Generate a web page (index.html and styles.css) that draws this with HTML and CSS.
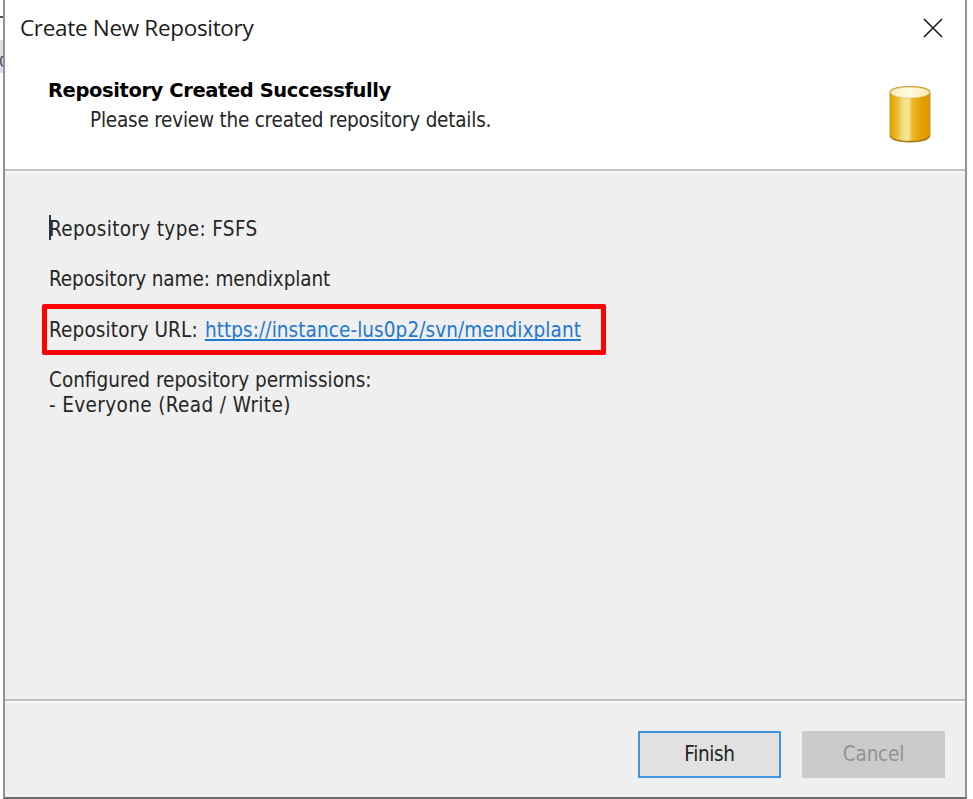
FILE: index.html
```
<!DOCTYPE html>
<html lang="en">
<head>
<meta charset="utf-8">
<title>Create New Repository</title>
<link rel="stylesheet" href="styles.css">
</head>
<body>
<div class="backdrop" aria-hidden="true">
  <span class="backdrop-mark"></span>
  <span class="backdrop-tab"><svg class="backdrop-glyph" viewBox="0 0 3 14"><path d="M3 1.500Q.8 1.500.8 6T3 11"/></svg></span>
</div>
<main class="dialog">
  <header class="header">
    <div class="titlebar">
      <span class="title">Create New Repository</span>
      <svg class="close" viewBox="0 0 20 20"><path d="M1 1 19 19M19 1 1 19"/></svg>
    </div>
    <div class="banner">
      <div>
        <h1 class="heading">Repository Created Successfully</h1>
        <p class="subheading">Please review the created repository details.</p>
      </div>
      <svg class="database" viewBox="0 0 42 57">
        <defs>
          <linearGradient id="side"><stop offset="0" stop-color="#e6a500"/><stop offset=".12" stop-color="#e9ae12"/><stop offset=".34" stop-color="#f5e08a"/><stop offset=".46" stop-color="#f7e697"/><stop offset=".56" stop-color="#efb72a"/><stop offset=".8" stop-color="#e3a000"/><stop offset="1" stop-color="#dc9700"/></linearGradient>
          <linearGradient id="lid"><stop offset="0" stop-color="#fbeebc"/><stop offset=".5" stop-color="#fffbe2"/><stop offset="1" stop-color="#f9e8ae"/></linearGradient>
        </defs>
        <path class="body" d="M1 6V49C1 53.500 9 56 21 56S41 53.500 41 49V6C41 2.500 32 .5 21 .5S1 2.500 1 6Z" fill="url(#side)"/>
        <path class="shade" d="M1.500 50C3 53.500 10 55.500 21 55.500S39 53.500 40.500 50"/>
        <ellipse class="lid" cx="21" cy="6.500" rx="19.500" ry="5.500" fill="url(#lid)"/>
      </svg>
    </div>
  </header>
  <section class="details">
    <p class="row first"><span class="type">Repository type: FSFS</span></p>
    <p class="row"><span class="name">Repository name: mendixplant</span></p>
    <p class="row url"><span class="label">Repository URL:</span><a class="link">https://instance-lus0p2/svn/mendixplant</a></p>
    <p class="row"><span class="perm">Configured repository permissions:</span><br><span class="who">- Everyone (Read / Write)</span></p>
  </section>
  <footer class="footer">
    <button class="button primary">Finish</button>
    <button class="button" disabled>Cancel</button>
  </footer>
</main>
</body>
</html>
```
FILE: styles.css
```
* { box-sizing: border-box; }
body {
  margin: 0;
  width: 973px;
  height: 799px;
  overflow: hidden;
  display: flex;
  background: #fff;
  color: #262626;
  font: 20.5px/25px "DejaVu Sans Condensed", "DejaVu Sans", sans-serif;
  font-stretch: condensed;
}
h1, p { margin: 0; }
.backdrop { width: 3px; padding-top: 16px; display: flex; flex-direction: column; }
.backdrop-mark { height: 2px; background: #555; }
.backdrop-tab { height: 33px; margin-top: 22px; padding-top: 15px; background: #dcdfe3; border-bottom: 5px solid #cfe0f1; }
.backdrop-glyph { display: block; width: 3px; height: 14px; fill: none; stroke: #46505c; stroke-width: 1.500; }
.dialog {
  width: 964px;
  height: 799px;
  display: flex;
  flex-direction: column;
  border: 2px solid #929292;
  border-top: 0;
  border-bottom-color: #6c6a6a;
  background: #efefef;
}
.header { height: 171px; background: #fff; border-bottom: 2px solid #c2c4c2; }
.titlebar { display: flex; justify-content: space-between; align-items: center; height: 55px; padding: 0 22px 0 15px; }
.title { font: 22.5px/30px "Open Sans", "Noto Sans", sans-serif; letter-spacing: -.32px; color: #1c1c1c; }
.close { width: 20px; height: 20px; stroke: #222; stroke-width: 1.7; fill: none; }
.banner { display: flex; justify-content: space-between; padding: 23px 34px 0 43px; }
.heading { font: 700 19.5px/26px "DejaVu Sans", sans-serif; font-stretch: normal; color: #000; white-space: nowrap; letter-spacing: -.4px; }
.subheading { padding-left: 42px; line-height: 32px; letter-spacing: -.22px; }
.database { width: 42px; height: 57px; margin-top: 8px; }
.body { stroke: #b78620; stroke-width: .8; }
.shade { fill: none; stroke: #a9781b; stroke-width: 1.500; }
.lid { stroke: #d4ac55; stroke-width: .5; }
.details { height: 530px; padding: 44px 0 0 44px; border-top: 2px solid #f8f8f8; border-bottom: 2px solid #bfbfbf; }
.row { margin-bottom: 25px; white-space: nowrap; }
.first::before { content: ""; display: block; width: 2px; height: 25px; margin: -2px 0 -23px; background: #26364a; }
.type { letter-spacing: .36px; }
.name { letter-spacing: -.1px; }
.label { letter-spacing: .15px; }
.who { letter-spacing: .38px; }
.url {
  display: flex;
  gap: 7px;
  width: 564px;
  height: 51px;
  margin: -13px 0 12px -7px;
  padding: 9px 2px 7px;
  border: 5px solid #fe0000;
  border-radius: 2px;
}
.url + .row { padding-top: 1px; }
.link { letter-spacing: .08px; color: #2378d2; text-decoration: underline; text-decoration-thickness: 2px; text-underline-offset: 2px; text-decoration-skip-ink: none; }
.footer { flex: 1; display: flex; justify-content: flex-end; gap: 21px; padding: 28px 20px 0 0; border-top: 2px solid #f8f8f8; }
.button { width: 143px; height: 47px; padding: 0; border: 0; background: #cbcbcb; color: #939393; font: inherit; letter-spacing: -.2px; }
.primary { border: 2px solid #3e95dc; background: #e1e1e1; color: #222; letter-spacing: -.35px; }
```
